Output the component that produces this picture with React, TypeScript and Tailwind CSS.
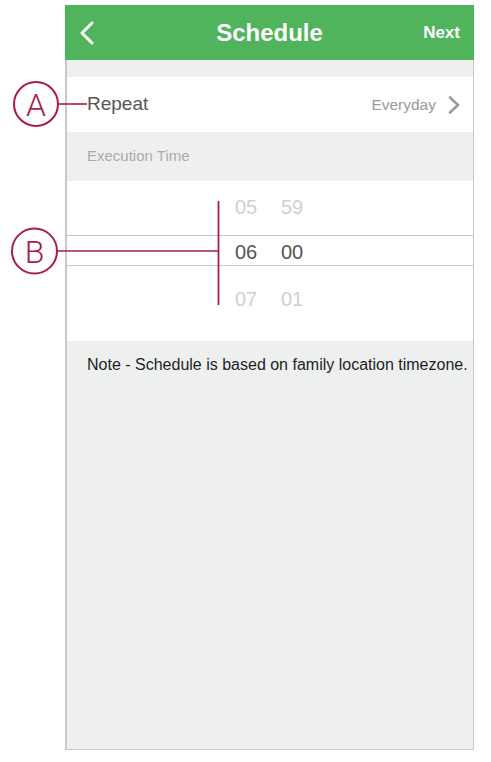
import React from 'react'

function BackIcon() {
  return (
    <svg width="16" height="24" viewBox="0 0 16 24" fill="none">
      <polyline points="13,2 3,12 13,22" stroke="#ffffff" strokeWidth="3" strokeLinecap="round" strokeLinejoin="round" />
    </svg>
  )
}

function ChevronRight() {
  return (
    <svg width="13" height="18" viewBox="0 0 13 18" fill="none">
      <polyline points="2,1.5 10,9 2,16.5" stroke="#9a9a9a" strokeWidth="2.6" strokeLinecap="round" strokeLinejoin="round" />
    </svg>
  )
}

// annotation marks drawn over the screenshot
function Callouts() {
  const red = '#a71d4c'
  return (
    <svg className="absolute inset-0 pointer-events-none" width="491" height="762" viewBox="0 0 491 762">
      <line x1="58" y1="104" x2="87" y2="104" stroke={red} strokeWidth="1.6" />
      <circle cx="36" cy="104" r="22" fill="#ffffff" stroke={red} strokeWidth="2" />
      <text x="36" y="115.5" textAnchor="middle" fontSize="32" fontWeight="300" fontFamily="Roboto, 'Liberation Sans', sans-serif" fill={red}>A</text>

      <line x1="57" y1="251" x2="218.5" y2="251" stroke={red} strokeWidth="1.6" />
      <line x1="218.5" y1="201" x2="218.5" y2="305" stroke={red} strokeWidth="1.8" />
      <circle cx="34.5" cy="251" r="22.5" fill="#ffffff" stroke={red} strokeWidth="2" />
      <text x="34.5" y="262.5" textAnchor="middle" fontSize="32" fontWeight="300" fontFamily="Roboto, 'Liberation Sans', sans-serif" fill={red}>B</text>
    </svg>
  )
}

function PickerRow({ h, m, active }: { h: string; m: string; active?: boolean }) {
  return (
    <div
      className={
        active
          ? 'flex h-[31px] items-center pt-[2px] pl-[168px] border-y border-[#c8c8c8] text-[20px] text-[#555555]'
          : 'flex h-[31px] items-center pl-[168px] text-[20px] text-[#d0d0d0]'
      }
    >
      <span className="w-[46px]">{h}</span>
      <span>{m}</span>
    </div>
  )
}

export default function App() {
  return (
    <div className="relative w-[491px] h-[762px] bg-white font-['Liberation_Sans',Arial,sans-serif]">
      <div className="ml-[65px] pt-[5px] w-[409px] flex flex-col">
        {/* header */}
        <div className="grid grid-cols-[1fr_auto_1fr] items-center h-[55px] bg-[#50b45c]">
          <div className="pl-[14px] flex items-center">
            <BackIcon />
          </div>
          <h1 className="text-[24px] font-bold text-white">Schedule</h1>
          <div className="flex justify-end pr-[14px] text-[17px] font-bold text-white">Next</div>
        </div>

        <div className="h-[690px] flex flex-col border-l-2 border-r border-b border-[#c9c9c9] bg-[#eef0ef]">
          <div className="h-[17px]" />

          <div className="h-[55px] bg-white flex items-center justify-between pl-[20px] pr-[12px]">
            <span className="text-[19px] text-[#555555]">Repeat</span>
            <div className="flex items-center gap-[12px]">
              <span className="text-[15.5px] text-[#9a9a9a]">Everyday</span>
              <ChevronRight />
            </div>
          </div>

          <div className="h-[49px] flex items-center pl-[20px] text-[15px] text-[#aaaaaa]">
            Execution Time
          </div>

          <div className="h-[160px] bg-white flex flex-col pt-[10px]">
            <PickerRow h="05" m="59" />
            <div className="mt-[13px]">
              <PickerRow h="06" m="00" active />
            </div>
            <div className="mt-[17px]">
              <PickerRow h="07" m="01" />
            </div>
          </div>

          <div className="flex-1 pt-[15px] pl-[20px]">
            <p className="text-[16px] leading-[18px] whitespace-nowrap text-[#1e1e1e]">
              Note - Schedule is based on family location timezone.
            </p>
          </div>
        </div>
      </div>
      <Callouts />
    </div>
  )
}
